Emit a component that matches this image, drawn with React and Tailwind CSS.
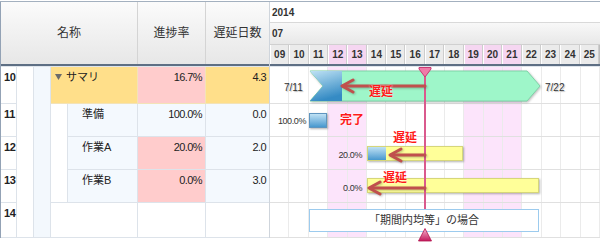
import React from "react";

const DAYS = ["09", "10", "11", "12", "13", "14", "15", "16", "17", "18", "19", "20", "21", "22", "23", "24", "25"];
const HOLIDAYS = ["12", "13", "19", "20", "21"];
const ROWS = ["h-[37px]", "h-[33px]", "h-[33px]", "h-[33px]", "h-[35px]"];

const line = "border-[#dde3ea]";
const num = "text-right pr-[3px] pt-[4px] tracking-[-0.6px]";

// 左側のタスク表
const TaskTable = () => {
  return (
    <div className="w-[270px] shrink-0 border-l border-r border-l-[#93a2b5] border-r-[#cfd5dc]">
      <div className="flex h-[64px] border-b-2 border-[#5e6f84] bg-linear-to-b from-[#fbfbfb] to-[#e7e7e7] text-[12px] text-[#333]">
        <div className="w-[137px] flex items-center justify-center border-r border-[#d4d4d4]">名称</div>
        <div className="w-[68px] flex items-center justify-center border-r border-[#d4d4d4]">進捗率</div>
        <div className="flex-1 flex items-center justify-center">遅延日数</div>
      </div>
      <div className="h-px bg-[#dfe5ec]" />
      <div className="grid grid-cols-[16px_17px_17px_17px_70px_68px_63px] grid-rows-[37px_33px_33px_33px_35px] text-[11px] leading-[13px]">
        {["10", "11", "12", "13", "14"].map((n, i) => (
          <div
            key={n}
            className={`col-start-1 border-b border-r ${line} pl-[3px] pt-[4px] font-bold tracking-[-0.3px] ${
              ["row-start-1", "row-start-2", "row-start-3", "row-start-4", "row-start-5"][i]
            }`}
          >
            {n}
          </div>
        ))}
        <div className={`col-start-2 row-start-1 row-span-5 bg-white border-r border-b ${line}`} />
        <div className={`col-start-3 row-start-1 row-span-5 bg-[#f3f8fd] border-r border-b ${line}`} />

        {/* サマリ */}
        <div className="col-start-4 col-span-2 row-start-1 bg-[#ffdf8a] border-b border-r border-[#f3e3b8] pl-[4px] pt-[4px] flex items-start gap-[4px]">
          <svg width="7" height="7" viewBox="0 0 7 7" className="mt-[3px]">
            <polygon points="0,0 7,0 3.5,6" fill="#6b6b6b" />
          </svg>
          <span>サマリ</span>
        </div>
        <div className={`col-start-6 row-start-1 bg-[#ffcccc] border-b border-r border-[#f3e3b8] ${num}`}>16.7%</div>
        <div className={`col-start-7 row-start-1 bg-[#ffdf8a] border-b border-[#f3e3b8] ${num}`}>4.3</div>

        <div className={`col-start-4 row-start-2 row-span-3 bg-white border-r border-b ${line}`} />

        <div className={`col-start-5 row-start-2 bg-[#f4f9fe] border-b border-r ${line} pl-[14px] pt-[4px]`}>準備</div>
        <div className={`col-start-6 row-start-2 bg-[#f4f9fe] border-b border-r ${line} ${num}`}>100.0%</div>
        <div className={`col-start-7 row-start-2 bg-[#f4f9fe] border-b ${line} ${num}`}>0.0</div>

        <div className={`col-start-5 row-start-3 bg-[#f4f9fe] border-b border-r ${line} pl-[14px] pt-[4px]`}>作業A</div>
        <div className={`col-start-6 row-start-3 bg-[#ffcccc] border-b border-r ${line} ${num}`}>20.0%</div>
        <div className={`col-start-7 row-start-3 bg-[#f4f9fe] border-b ${line} ${num}`}>2.0</div>

        <div className={`col-start-5 row-start-4 bg-[#f4f9fe] border-b border-r ${line} pl-[14px] pt-[4px]`}>作業B</div>
        <div className={`col-start-6 row-start-4 bg-[#ffcccc] border-b border-r ${line} ${num}`}>0.0%</div>
        <div className={`col-start-7 row-start-4 bg-[#f4f9fe] border-b ${line} ${num}`}>3.0</div>

        <div className={`col-start-4 col-span-2 row-start-5 bg-white border-b border-r ${line}`} />
        <div className={`col-start-6 row-start-5 bg-white border-b border-r ${line}`} />
        <div className={`col-start-7 row-start-5 bg-white border-b ${line}`} />
      </div>
    </div>
  );
};

const Arrow = ({ x1, x2, y }) => (
  <g stroke="#c0504d" strokeWidth="3" fill="none" strokeLinecap="round" strokeLinejoin="round">
    <line x1={x1} y1={y} x2={x2 + 1} y2={y} />
    <polyline points={`${x2 + 11},${y - 6} ${x2},${y} ${x2 + 11},${y + 6}`} />
  </g>
);

const Chart = () => {
  return (
    <div className="w-[330px] shrink-0">
      <div className="h-[21px] border-b border-[#d9d9d9] flex items-center pl-[2px] text-[10px] font-bold text-[#333]">2014</div>
      <div className="h-[22px] border-b border-[#d0d0d0] bg-linear-to-b from-[#f8f8f8] to-[#e8e8e8] flex items-center pl-[2px] text-[10px] font-bold text-[#333]">
        07
      </div>
      <div className="h-[19px] grid grid-cols-[repeat(17,minmax(0,1fr))] border-r border-[#bdbdbd]">
        {DAYS.map((d) => (
          <div
            key={d}
            className={`flex items-center justify-center border-l border-r border-l-white border-r-[#cdcdcd] text-[10px] font-bold text-[#333] ${
              HOLIDAYS.includes(d) ? "bg-[#f5d6f1]" : "bg-[#ebebeb]"
            }`}
          >
            {d}
          </div>
        ))}
      </div>
      <div className="h-[2px] bg-[#5e6f84]" />
      <div className="h-px bg-[#dfe5ec]" />

      <div className="relative">
        {ROWS.map((h, i) => (
          <div key={i} className={`grid grid-cols-[repeat(17,minmax(0,1fr))] border-b border-[#e0e0e0] ${h}`}>
            {DAYS.map((d) => (
              <div key={d} className={`border-r border-[#ebebeb] ${HOLIDAYS.includes(d) ? "bg-[#fce4fb]" : ""}`} />
            ))}
          </div>
        ))}

        {/* サマリバー */}
        <svg className="absolute left-0 top-0 drop-shadow-[1px_1px_1px_rgba(0,0,0,0.25)]" width="330" height="40">
          <defs>
            <linearGradient id="prog" x1="0" y1="0" x2="0.3" y2="1">
              <stop offset="0" stopColor="#bfe2f4" />
              <stop offset="1" stopColor="#358bc4" />
            </linearGradient>
            <clipPath id="sum">
              <polygon points="40,4 257,4 270,19 257,34 40,34 53,19" />
            </clipPath>
          </defs>
          <polygon points="40,4 257,4 270,19 257,34 40,34 53,19" fill="#9ef6c9" stroke="#7fd3a8" strokeWidth="1" />
          <rect x="40" y="4" width="32" height="30" fill="url(#prog)" clipPath="url(#sum)" />
        </svg>
        <span className="absolute left-[14px] top-[13px] text-[10px] text-[#333] [text-shadow:1px_1px_1px_#bbb]">7/11</span>
        <span className="absolute left-[275px] top-[13px] text-[10px] text-[#333] [text-shadow:1px_1px_1px_#bbb]">7/22</span>

        {/* 準備 */}
        <span className="absolute right-[294px] top-[48px] text-[9px] tracking-[-0.4px] text-[#333]">100.0%</span>
        <div className="absolute left-[39px] top-[46px] w-[18px] h-[15px] border border-[#5f95bf] bg-linear-to-b from-[#bfe2f4] to-[#4698ce] shadow-[1px_1px_2px_rgba(0,0,0,0.3)]" />

        {/* 作業A */}
        <span className="absolute right-[238px] top-[82px] text-[9px] tracking-[-0.4px] text-[#333]">20.0%</span>
        <div className="absolute left-[97px] top-[79px] w-[96px] h-[15px] border border-[#d6d67a] bg-[#ffff99] shadow-[1px_1px_2px_rgba(0,0,0,0.3)]">
          <div className="h-full w-[18px] bg-linear-to-b from-[#bfe2f4] to-[#4698ce]" />
        </div>

        {/* 作業B */}
        <span className="absolute right-[238px] top-[115px] text-[9px] tracking-[-0.4px] text-[#333]">0.0%</span>
        <div className="absolute left-[97px] top-[111px] w-[172px] h-[15px] border border-[#d6d67a] bg-[#ffff99] shadow-[1px_1px_2px_rgba(0,0,0,0.3)]" />

        {/* 今日の線 */}
        <div className="absolute left-[154px] top-0 w-[2px] h-[171px] bg-[#da5a8d]" />

        <div className="absolute left-[39px] top-[142px] w-[230px] h-[23px] border border-[#9ccbee] bg-white flex items-center justify-center text-[11px] text-[#333]">
          「期間内均等」の場合
        </div>

        <svg className="absolute left-0 top-0 drop-shadow-[1px_1px_1px_rgba(0,0,0,0.25)]" width="330" height="171">
          <Arrow x1={155} x2={72} y={19} />
          <Arrow x1={155} x2={120} y={88} />
          <Arrow x1={155} x2={99} y={121} />
        </svg>

        <span className="absolute left-[99px] top-[19px] text-[12px] leading-none font-bold text-[#ff1a1a] [text-shadow:0_0_2px_#fff]">遅延</span>
        <span className="absolute left-[70px] top-[47px] text-[12px] leading-none font-bold text-[#ff1a1a] [text-shadow:0_0_2px_#fff]">完了</span>
        <span className="absolute left-[123px] top-[65px] text-[12px] leading-none font-bold text-[#ff1a1a] [text-shadow:0_0_2px_#fff]">遅延</span>
        <span className="absolute left-[113px] top-[105px] text-[12px] leading-none font-bold text-[#ff1a1a] [text-shadow:0_0_2px_#fff]">遅延</span>

        <svg className="absolute left-[148px] top-0" width="14" height="11">
          <polygon points="1,0.5 13,0.5 13,2 7,10 1,2" fill="#f07aa8" stroke="#c93a73" strokeWidth="1" />
        </svg>
        <svg className="absolute left-[148px] top-[161px]" width="14" height="14">
          <defs>
            <linearGradient id="mark" x1="0" y1="0" x2="0" y2="1">
              <stop offset="0" stopColor="#f7b3cf" />
              <stop offset="1" stopColor="#c2185b" />
            </linearGradient>
          </defs>
          <polygon points="7,0.5 13.5,13 0.5,13" fill="url(#mark)" stroke="#b3144f" strokeWidth="0.8" />
        </svg>
      </div>
    </div>
  );
};

const App = () => {
  return (
    <div className="w-[600px] h-[242px] bg-white overflow-hidden pt-px font-['Liberation_Sans','Noto_Sans_CJK_JP',sans-serif] text-[#222]">
      <div className="flex border-t border-[#a3b0bf]">
        <TaskTable />
        <Chart />
      </div>
    </div>
  );
};

export default App;
